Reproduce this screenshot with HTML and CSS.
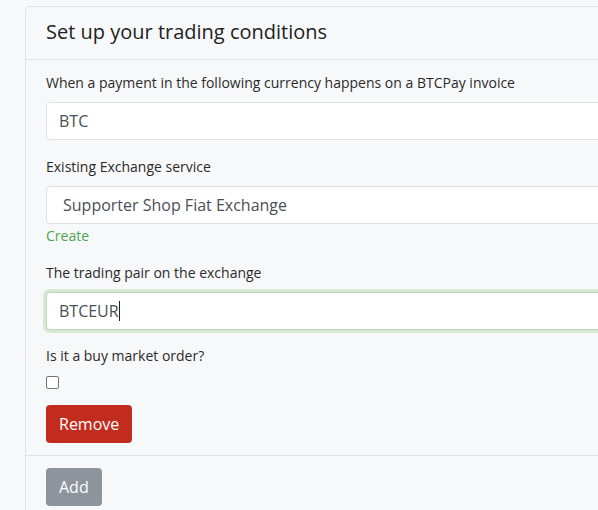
FILE: index.html
```html
<!DOCTYPE html>
<html>
<head>
<meta charset="utf-8">
<link rel="stylesheet" href="styles.css">
</head>
<body>
<div class="card">
  <div class="card-header">
    <h4 class="title">Set up your trading conditions</h4>
  </div>
  <div class="card-body">
    <div class="form-group">
      <label class="label">When a payment in the following currency happens on a BTCPay invoice</label>
      <div class="control">BTC</div>
    </div>
    <div class="form-group">
      <label class="label">Existing Exchange service</label>
      <div class="control select">Supporter Shop Fiat Exchange</div>
      <a class="link">Create</a>
    </div>
    <div class="form-group tight">
      <label class="label">The trading pair on the exchange</label>
      <div class="control focus">BTCEUR<span class="caret"></span></div>
    </div>
    <div class="form-group">
      <label class="label">Is it a buy market order?</label>
      <span class="checkbox"></span>
    </div>
    <button class="btn btn-danger">Remove</button>
  </div>
  <div class="card-footer">
    <button class="btn btn-secondary">Add</button>
  </div>
</div>
</body>
</html>
```
FILE: styles.css
```css
html, body {
  margin: 0;
  padding: 0;
  background: #f7f8fa;
  overflow: hidden;
}
body {
  font-family: "Open Sans", "Liberation Sans", sans-serif;
  color: #2b2b2b;
  padding: 6px 0 0 25px;
}
.card {
  width: 640px;
  background: #f7f8fa;
  border: 1px solid #e2e4e7;
  border-radius: 4px;
}
.card-header {
  padding: 11px 20px 13px 20px;
  border-bottom: 1px solid #e2e4e7;
}
.title {
  margin: 0;
  font-size: 20px;
  line-height: 28px;
  font-weight: 400;
  color: #222;
}
.card-body {
  padding: 12px 20px 12px 20px;
  display: flex;
  flex-direction: column;
  align-items: flex-start;
}
.form-group {
  display: flex;
  flex-direction: column;
  align-items: flex-start;
  width: 100%;
  margin-bottom: 16px;
}
.form-group.tight {
  margin-bottom: 15px;
}
.label {
  font-size: 14px;
  line-height: 21px;
  margin-bottom: 9px;
  color: #2b2b2b;
}
.control {
  box-sizing: border-box;
  width: 100%;
  height: 38px;
  line-height: 36px;
  padding: 0 12px;
  font-size: 16px;
  color: #4a4f55;
  background: #fff;
  border: 1px solid #dfe1e4;
  border-radius: 4px;
}
.select {
  padding-left: 16px;
}
.focus {
  border-color: #bcd9b6;
  box-shadow: 0 0 0 3px #d6e8d2;
}
.caret {
  display: inline-block;
  width: 1px;
  height: 20px;
  background: #222;
  vertical-align: middle;
  margin-top: -3px;
}
.link {
  margin-top: 1px;
  font-size: 14px;
  line-height: 21px;
  color: #4fa450;
}
.checkbox {
  display: block;
  box-sizing: border-box;
  width: 13px;
  height: 13px;
  margin: 1px 0 0 0;
  border: 1px solid #767676;
  border-radius: 2px;
  background: #fff;
}
.btn {
  font-family: "Open Sans", "Liberation Sans", sans-serif;
  font-size: 16px;
  line-height: 24px;
  padding: 7px 13px;
  border: none;
  border-radius: 4px;
  color: #fff;
}
.btn-danger {
  background: #c22c1e;
}
.btn-secondary {
  background: #8d949b;
}
.card-footer {
  padding: 12px 20px 12px 20px;
  border-top: 1px solid #e2e4e7;
}
```
